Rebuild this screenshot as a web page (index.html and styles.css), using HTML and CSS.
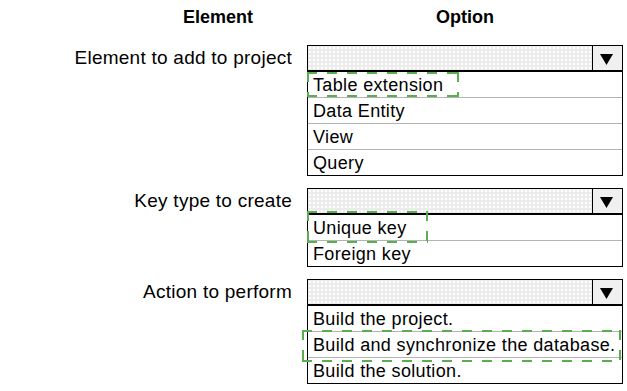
FILE: index.html
```html
<!DOCTYPE html>
<html lang="en">
<head>
    <meta charset="UTF-8">
    <meta name="viewport" content="width=device-width, initial-scale=1.0">
    <title>Element and Option</title>
    <link rel="stylesheet" href="styles.css">
</head>
<body>

<div class="page">
    <div class="row head-row">
        <div class="head head-label">Element</div>
        <div class="head">Option</div>
    </div>

    <div class="row field">
        <div class="label">Element to add to project</div>
        <div class="dropdown">
            <div class="dd-head">
                <div class="dd-value"></div>
                <div class="dd-arrow">
                    <svg width="13" height="11" viewBox="0 0 13 11"><polygon points="0,0 13,0 6.5,11" fill="#000"/></svg>
                </div>
            </div>
            <ul class="dd-list">
                <li>Table extension<span class="mark mark-1"></span></li>
                <li>Data Entity</li>
                <li>View</li>
                <li>Query</li>
            </ul>
        </div>
    </div>

    <div class="row field">
        <div class="label">Key type to create</div>
        <div class="dropdown">
            <div class="dd-head">
                <div class="dd-value"></div>
                <div class="dd-arrow">
                    <svg width="13" height="11" viewBox="0 0 13 11"><polygon points="0,0 13,0 6.5,11" fill="#000"/></svg>
                </div>
            </div>
            <ul class="dd-list">
                <li>Unique key<span class="mark mark-2"></span></li>
                <li>Foreign key</li>
            </ul>
        </div>
    </div>

    <div class="row field">
        <div class="label">Action to perform</div>
        <div class="dropdown">
            <div class="dd-head">
                <div class="dd-value"></div>
                <div class="dd-arrow">
                    <svg width="13" height="11" viewBox="0 0 13 11"><polygon points="0,0 13,0 6.5,11" fill="#000"/></svg>
                </div>
            </div>
            <ul class="dd-list">
                <li>Build the project.</li>
                <li>Build and synchronize the database.<span class="mark mark-3"></span></li>
                <li>Build the solution.</li>
            </ul>
        </div>
    </div>
</div>

</body>
</html>
```

FILE: styles.css
```css
body {
    margin: 0;
    background-color: white;
    font-family: "Liberation Sans", Arial, sans-serif;
    color: #000;
}
.page {
    width: 627px;
}
.row {
    display: grid;
    grid-template-columns: 292px 316px;
    column-gap: 15px;
}
.head-row {
    height: 45px;
    padding-top: 7px;
    box-sizing: border-box;
}
.head {
    font-weight: bold;
    font-size: 18px;
    line-height: 20px;
    text-align: center;
}
.head-label {
    padding-left: 144px;
}
.field {
    margin-bottom: 12px;
}
.label {
    font-size: 19px;
    letter-spacing: 0.25px;
    line-height: 26px;
    text-align: right;
}
.dropdown {
    border: 1px solid #000;
}
.dd-head {
    display: flex;
    height: 24px;
    border-bottom: 2px solid #000;
}
.dd-value {
    flex: 1;
    background-color: #ececec;
    background-image: radial-gradient(#fff 0.7px, transparent 1px);
    background-size: 4px 4px;
}
.dd-arrow {
    width: 30px;
    border-left: 1px solid #000;
    background-color: #f0f0f0;
    display: flex;
    align-items: center;
    justify-content: center;
    padding-right: 3px;
    padding-top: 2px;
    box-sizing: border-box;
}
.dd-list {
    list-style: none;
    margin: 0;
    padding: 0;
}
.dd-list li {
    position: relative;
    height: 25px;
    line-height: 26px;
    padding-left: 5px;
    font-size: 18px;
    letter-spacing: 0.35px;
    border-bottom: 1px solid #b4b4b4;
    white-space: nowrap;
}
.dd-list li:last-child {
    border-bottom: none;
}
.mark {
    position: absolute;
    --g: #5aae50;
    background:
        linear-gradient(90deg, var(--g) 10px, transparent 10px) top left / 20px 2px repeat-x,
        linear-gradient(90deg, var(--g) 10px, transparent 10px) bottom left / 20px 2px repeat-x,
        linear-gradient(180deg, var(--g) 10px, transparent 10px) top left / 2px 20px repeat-y,
        linear-gradient(180deg, var(--g) 10px, transparent 10px) top right / 2px 20px repeat-y;
}
.mark-1 { left: -1px; top: 0; width: 152px; height: 25px; }
.mark-2 { left: -1px; top: -4px; width: 121px; height: 32px; }
.mark-3 { left: -6px; top: -2px; width: 319px; height: 32px; }
```
